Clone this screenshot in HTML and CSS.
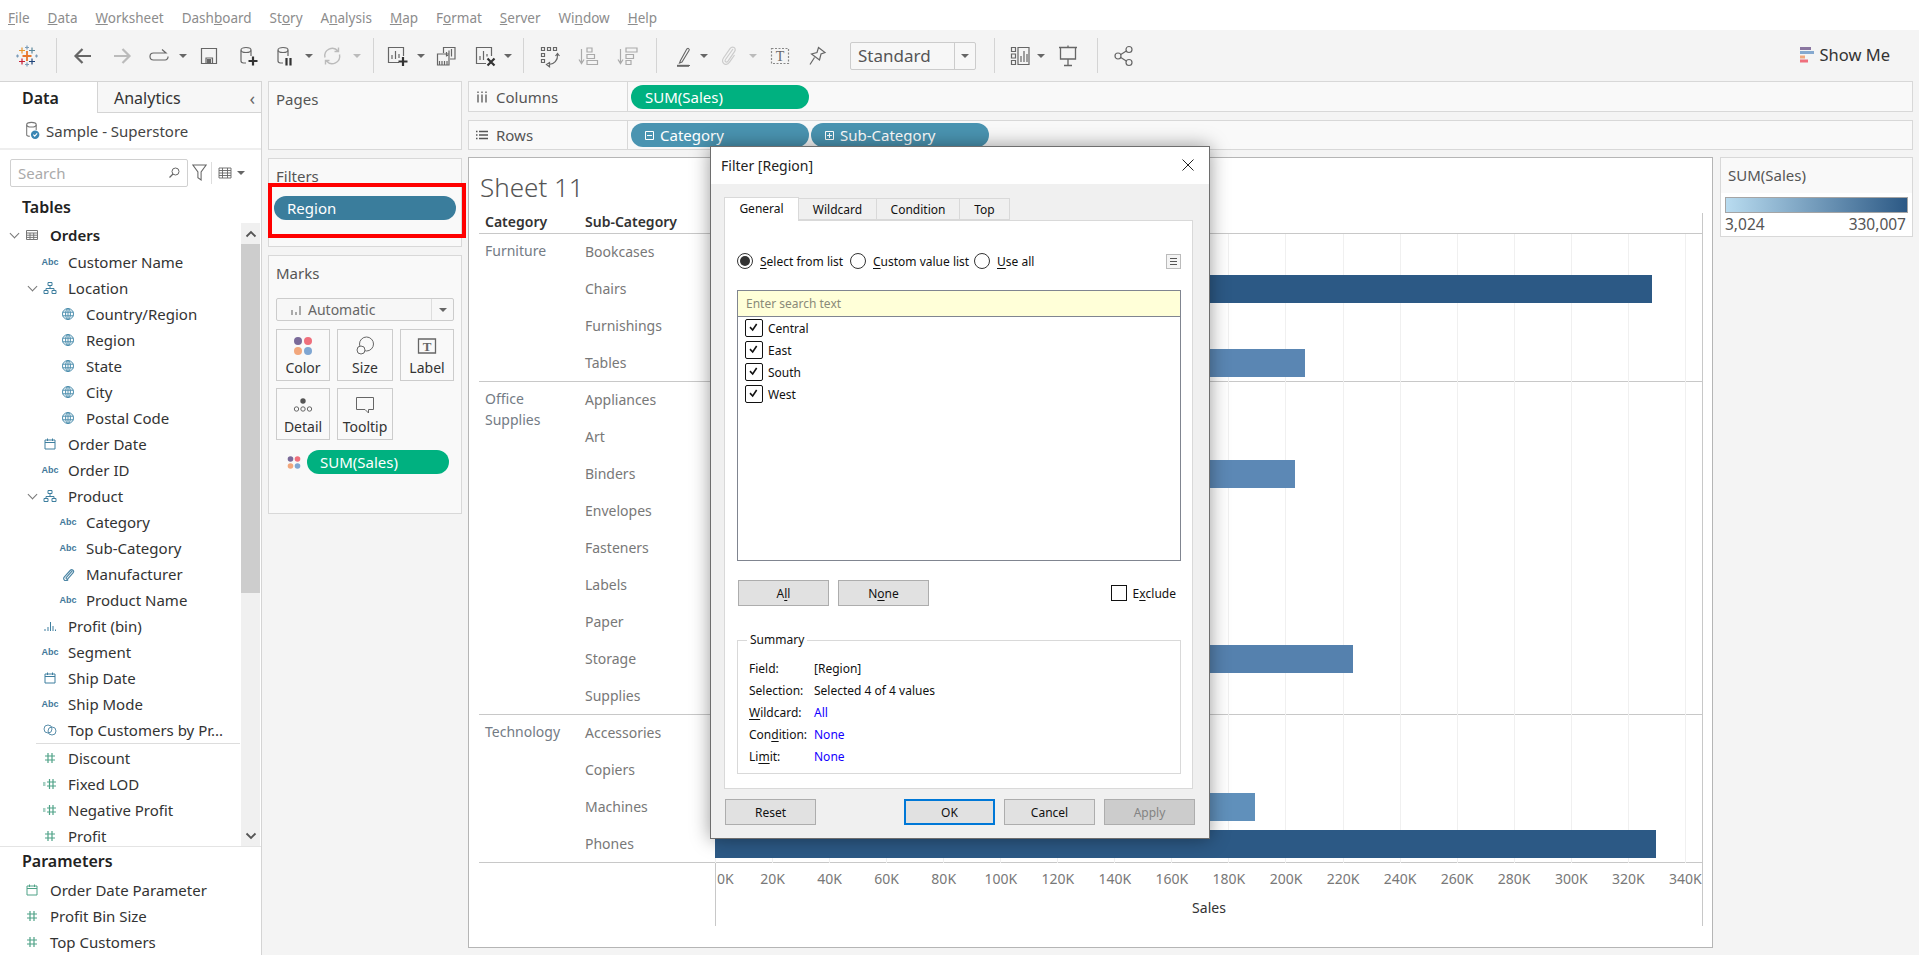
FILE: index.html
```html
<!DOCTYPE html>
<html lang="en">
<head>
<meta charset="utf-8">
<title>Tableau - Sheet 11</title>
<link rel="stylesheet" href="styles.css">
</head>
<body>
<svg class="sprite" aria-hidden="true">
  <symbol id="i-table" viewBox="0 0 14 14"><path d="M1.5 2.5h11v9h-11zM1.5 5h11M1.5 7.2h11M1.5 9.4h11M5 5v6.5M8.7 5v6.5" fill="none" stroke="#777"/></symbol>
  <symbol id="i-hier" viewBox="0 0 14 14"><path d="M5 1.5h4v3H5zM1 9.5h4v3H1zM9 9.5h4v3H9zM7 4.5v3M3 9.5v-2h8v2" fill="none" stroke="#3f7f9f"/></symbol>
  <symbol id="i-globe" viewBox="0 0 14 14"><g fill="none" stroke="#4d8fae"><circle cx="7" cy="7" r="5.5"/><ellipse cx="7" cy="7" rx="2.4" ry="5.5"/><path d="M1.5 5.2h11M1.5 8.8h11M7 1.5v11"/></g></symbol>
  <symbol id="i-cal" viewBox="0 0 14 14"><path d="M2 3h10v9H2zM2 5.5h10M4.5 1.5V4M9.5 1.5V4" fill="none" stroke="#3f7f9f"/></symbol>
  <symbol id="i-calg" viewBox="0 0 14 14"><path d="M2 3h10v9H2zM2 5.5h10M4.5 1.5V4M9.5 1.5V4" fill="none" stroke="#4fa287"/></symbol>
  <symbol id="i-clip" viewBox="0 0 14 14"><path d="M11.200 3.800 5.400 10.400c-1 1.100.6 2.400 1.600 1.300l5-5.800c1.700-2-1-4.400-2.800-2.400L3.400 9.800c-2.400 2.800 1.500 5.400 3.700 2.700" fill="none" stroke="#4d86a5" stroke-width="1.200"/></symbol>
  <symbol id="i-bin" viewBox="0 0 14 14"><path d="M1.500 10h1v2h-1zM4.500 8h1v4h-1zM7 3h1v9H7zM9.500 7h1v5h-1zM12 10.500h1V12h-1z" fill="#3f7f9f"/></symbol>
  <symbol id="i-set" viewBox="0 0 14 14"><g fill="none" stroke="#5b8fab"><circle cx="5" cy="6" r="4"/><circle cx="9" cy="8" r="4"/></g></symbol>
  <symbol id="i-hash" viewBox="0 0 14 14"><path d="M5 2v10M9 2v10M2 5h10M2 9h10" fill="none" stroke="#4fa287" stroke-width="1.200"/></symbol>
  <symbol id="i-calc" viewBox="0 0 14 14"><path d="M6.500 2v10M10 2v10M4 5h9M4 9h9M0 6h2.500M0 8h2.500" fill="none" stroke="#4fa287" stroke-width="1.200"/></symbol>
  <symbol id="i-dots" viewBox="0 0 16 16"><circle cx="4" cy="4" r="3.200" fill="#7a6a99"/><circle cx="12" cy="4" r="3.200" fill="#ef6f7c"/><circle cx="4" cy="12" r="3.200" fill="#f2a77c"/><circle cx="12" cy="12" r="3.200" fill="#7fa6d2"/></symbol>
</svg>

<div class="page">
  <nav class="menubar">
    <span><u>F</u>ile</span><span><u>D</u>ata</span><span><u>W</u>orksheet</span><span>Dash<u>b</u>oard</span><span>St<u>o</u>ry</span><span>A<u>n</u>alysis</span><span><u>M</u>ap</span><span>F<u>o</u>rmat</span><span><u>S</u>erver</span><span>Wi<u>n</u>dow</span><span><u>H</u>elp</span>
  </nav>

  <header class="toolbar">
    <svg class="ic m15" viewBox="0 0 24 24" stroke-width="1.400">
      <path d="M12 7v10M7.500 12h9" stroke="#e8762b" stroke-width="1.800"/>
      <path d="M7 3.500v6M4 6.500h6" stroke="#e8962b"/>
      <path d="M17 3.500v6M14 6.500h6" stroke="#5b879b"/>
      <path d="M7 14.500v6M4 17.500h6" stroke="#c72035"/>
      <path d="M17 14.500v6M14 17.500h6" stroke="#1f447a"/>
      <path d="M12 1.500v4M10 3.500h4M12 18.500v4M10 20.500h4M2.500 10.500v3M1 12h3M21.500 10.500v3M20 12h3" stroke="#7b9cb8"/>
    </svg>
    <i class="sep m17"></i>
    <svg class="ic m14" viewBox="0 0 24 24"><path d="M20 12H5M11.500 5 4.500 12l7 7" stroke-width="2.200"/></svg>
    <svg class="ic m15 dim" viewBox="0 0 24 24"><path d="M4 12h15M12.500 5l7 7-7 7" stroke-width="2.200"/></svg>
    <svg class="ic m13" viewBox="0 0 24 24"><path d="M19 9H6.500a3.500 3.500 0 0 0 0 7H18a3 3 0 0 0 3-3.500M15 5.500 19 9l-4 0"/></svg>
    <i class="drop m8"></i>
    <svg class="ic m10" viewBox="0 0 24 24"><path d="M4.500 4.500h15v15h-15zM9 19.500V14h6.500v5.500"/><path d="M10.500 15.500h3v4h-3z" fill="#666"/></svg>
    <svg class="ic m15" viewBox="0 0 24 24"><path d="M5 6.500v10.500c0 1 1 1.800 2.500 2H10M15 6.500V12"/><ellipse cx="10" cy="6" rx="5" ry="2.500"/><path d="M17 12.500v9M12.500 17h9" stroke="#333" stroke-width="2.200"/></svg>
    <svg class="ic m13" viewBox="0 0 24 24"><path d="M5 6.500v10.500c0 1 1 1.800 2.500 2H10M15 6.500V12"/><ellipse cx="10" cy="6" rx="5" ry="2.500"/><path d="M13.500 14v7.500M17.500 14v7.500" stroke="#333" stroke-width="2.200"/></svg>
    <i class="drop m8"></i>
    <svg class="ic m7 dim" viewBox="0 0 24 24"><path d="M5 13.500A7.500 7.500 0 0 1 18 7M19.500 10.500A7.500 7.500 0 0 1 6.500 17M18.500 3.500V7.500h-4M5.500 20.500v-4h4" stroke-width="1.400"/></svg>
    <i class="drop m9 dimdrop"></i>
    <i class="sep m12"></i>
    <svg class="ic m11" viewBox="0 0 24 24"><path d="M14 18.500H3.500v-15h15V12M7 15v-4M10.500 15V7M14 14V10"/><path d="M18 13v9M13.500 17.500h9" stroke="#333" stroke-width="2.200"/></svg>
    <i class="drop m8"></i>
    <svg class="ic m9" viewBox="0 0 24 24"><path d="M9.500 9V3.500H21V15h-5"/><path d="M3.500 10H15v11H3.500zM14 11M5.500 21v-4M8 21v-4M10.500 21v-4M13 21v-4M13.500 12v-1M15 12.500v-6M17.500 12.500V5M12.500 12.500V8"/></svg>
    <svg class="ic m15" viewBox="0 0 24 24"><path d="M13 19.500H3.500v-16h15V12M7 16v-4M10.500 16V7M14 12.500V10"/><path d="m14.500 14.500 7 7M21.500 14.500l-7 7" stroke="#333" stroke-width="2.200"/></svg>
    <i class="drop m7"></i>
    <i class="sep m11"></i>
    <svg class="ic m13" viewBox="0 0 24 24"><path d="M4.500 3.500h3v3h-3zM10.500 3.500h3v3h-3zM16.500 3.500h3v3h-3zM4.500 9.500h3v3h-3zM4.500 15.500h3v3h-3zM20.500 11c.5 5-3.500 9.500-8.500 9.500M9.500 20.500l3-2v4.200zM18.500 12l2-2.500 2 2.500"/></svg>
    <svg class="ic m16 dimmer" viewBox="0 0 24 24"><path d="M4.500 5v13M2 15.500l2.500 4 2.500-4M10 4h5v4h-5zM10 10.500h7.500v4H10zM10 16.500h10.500v4H10z"/></svg>
    <svg class="ic m15 dimmer" viewBox="0 0 24 24"><path d="M4.500 5v13M2 15.500l2.500 4 2.500-4M10 4h11v4H10zM10 10.500h7.500v4H10zM10 16.500h5v4h-5z"/></svg>
    <i class="sep m16"></i>
    <svg class="ic m14" viewBox="0 0 24 24"><path d="M9.500 16.500 8.500 19l2.500-1 7-11.500c1-1.600-1.200-3-2.200-1.400zM7 21.500h12" stroke-width="1.100"/><path d="M6 21.800h12" stroke="#666" stroke-width="2"/></svg>
    <i class="drop m5"></i>
    <svg class="ic m9 faint" viewBox="0 0 24 24"><path d="M16 5 8.500 15.500c-1.500 2 1 3.700 2.500 1.700l6.500-9.500c2.500-3.500-2-6.500-4.500-3L6.500 14c-3.500 5 3 8.700 6 4.200l5-7.200"/></svg>
    <i class="drop m8 dimdrop"></i>
    <svg class="ic m11" viewBox="0 0 24 24"><path d="M3.500 4.500h17v15h-17z" stroke-dasharray="2 1.500" stroke="#888"/><text x="12" y="17" class="t-glyph">T</text></svg>
    <svg class="ic m13" viewBox="0 0 24 24"><path d="M13.500 3.500 20 8.500l-4 1.500-1.500 6-8-6 5.500-1.500zM9.500 13.500 5 20.500"/></svg>
    <div class="combo m21"><span>Standard</span><i class="combo-btn"><i class="drop"></i></i></div>
    <i class="sep m18"></i>
    <svg class="ic m13" viewBox="0 0 24 24"><path d="M3.500 3.500h4v4h-4zM3.500 10h4v4h-4zM3.500 16.500h4v4h-4zM10 3.500h11v17H10zM13 18v-6M16 18V7M19 18v-8"/></svg>
    <i class="drop m5"></i>
    <svg class="ic m11" viewBox="0 0 24 24"><path d="M3 3.500h18M4.500 4v11h15V4M12 15v7M8 21.500h8M12 1.500v2" stroke-width="1.300"/></svg>
    <i class="sep m17"></i>
    <svg class="ic m14" viewBox="0 0 24 24"><circle cx="17" cy="5.500" r="3"/><circle cx="6" cy="12" r="3"/><circle cx="17" cy="18.500" r="3"/><path d="m8.800 10.500 5.500-3.500M8.800 13.500l5.500 3.500"/></svg>
    <div class="showme">
      <svg class="showme-ic" viewBox="0 0 14 16"><path d="M0 0h11v3H0z" fill="#8a76a0"/><path d="M0 4h14v3H0z" fill="#86a9cf"/><path d="M0 8.500h5v3H0z" fill="#f2a77c"/><path d="M0 12.500h8v3H0z" fill="#ef6f7c"/></svg>
      <span>Show Me</span>
    </div>
  </header>

  <main class="workspace">
    <aside class="datapane">
      <div class="tabs">
        <div class="tab active">Data</div>
        <div class="tab">Analytics<span class="collapse">‹</span></div>
      </div>
      <div class="source">
        <svg class="source-ic" viewBox="0 0 14 18"><path d="M1.500 3.500V13c0 1 1 1.500 3 1.500M10.500 3.500v5" fill="none" stroke="#777"/><ellipse cx="6" cy="3.500" rx="4.500" ry="2.200" fill="none" stroke="#777"/><circle cx="9.500" cy="13" r="4" fill="#3a86b4"/><path d="m7.800 13 1.300 1.400 2.300-2.600" fill="none" stroke="#fff"/></svg>
        <span>Sample - Superstore</span>
      </div>
      <div class="searchrow">
        <div class="search"><span>Search</span><svg class="lens" viewBox="0 0 12 12"><circle cx="7.500" cy="4.500" r="3.500" fill="none" stroke="#666"/><path d="M5 7 1.500 10.500" stroke="#666" stroke-width="1.300"/></svg></div>
        <svg class="funnel" viewBox="0 0 14 16"><path d="M.8 1h12.400L8.500 7.500V15l-3-2V7.500z" fill="none" stroke="#666"/></svg>
        <i class="vline"></i>
        <svg class="viewico" viewBox="0 0 14 12"><path d="M1 1h12v10H1zM1 3.500h12M1 6h12M1 8.500h12M4.500 1v10M9.500 1v10" fill="none" stroke="#666" stroke-width=".9"/></svg>
        <i class="drop m5"></i>
      </div>
      <div class="heading tables-h">Tables</div>
      <div class="fields">
        <div class="fieldlist">
          <div class="row l0 bold"><i class="chev"></i><svg class="fi"><use href="#i-table"/></svg><span>Orders</span></div>
          <div class="row l1"><b class="abc">Abc</b><span>Customer Name</span></div>
          <div class="row l1 haschev"><i class="chev"></i><svg class="fi"><use href="#i-hier"/></svg><span>Location</span></div>
          <div class="row l2"><svg class="fi"><use href="#i-globe"/></svg><span>Country/Region</span></div>
          <div class="row l2"><svg class="fi"><use href="#i-globe"/></svg><span>Region</span></div>
          <div class="row l2"><svg class="fi"><use href="#i-globe"/></svg><span>State</span></div>
          <div class="row l2"><svg class="fi"><use href="#i-globe"/></svg><span>City</span></div>
          <div class="row l2"><svg class="fi"><use href="#i-globe"/></svg><span>Postal Code</span></div>
          <div class="row l1"><svg class="fi"><use href="#i-cal"/></svg><span>Order Date</span></div>
          <div class="row l1"><b class="abc">Abc</b><span>Order ID</span></div>
          <div class="row l1 haschev"><i class="chev"></i><svg class="fi"><use href="#i-hier"/></svg><span>Product</span></div>
          <div class="row l2"><b class="abc">Abc</b><span>Category</span></div>
          <div class="row l2"><b class="abc">Abc</b><span>Sub-Category</span></div>
          <div class="row l2"><svg class="fi"><use href="#i-clip"/></svg><span>Manufacturer</span></div>
          <div class="row l2"><b class="abc">Abc</b><span>Product Name</span></div>
          <div class="row l1"><svg class="fi"><use href="#i-bin"/></svg><span>Profit (bin)</span></div>
          <div class="row l1"><b class="abc">Abc</b><span>Segment</span></div>
          <div class="row l1"><svg class="fi"><use href="#i-cal"/></svg><span>Ship Date</span></div>
          <div class="row l1"><b class="abc">Abc</b><span>Ship Mode</span></div>
          <div class="row l1"><svg class="fi"><use href="#i-set"/></svg><span>Top Customers by Pr...</span></div>
          <hr class="divider">
          <div class="row l1"><svg class="fi"><use href="#i-hash"/></svg><span>Discount</span></div>
          <div class="row l1"><svg class="fi"><use href="#i-calc"/></svg><span>Fixed LOD</span></div>
          <div class="row l1"><svg class="fi"><use href="#i-calc"/></svg><span>Negative Profit</span></div>
          <div class="row l1"><svg class="fi"><use href="#i-hash"/></svg><span>Profit</span></div>
        </div>
        <div class="scrollbar">
          <div class="sb-btn"><svg viewBox="0 0 12 8"><path d="M1.500 6.500 6 2l4.500 4.500" fill="none" stroke="#555" stroke-width="1.800"/></svg></div>
          <div class="sb-thumb"></div>
          <div class="sb-track"></div>
          <div class="sb-btn"><svg viewBox="0 0 12 8"><path d="M1.500 1.500 6 6l4.500-4.500" fill="none" stroke="#555" stroke-width="1.800"/></svg></div>
        </div>
      </div>
      <div class="params">
        <div class="heading params-h">Parameters</div>
        <div class="row l0"><svg class="fi"><use href="#i-calg"/></svg><span>Order Date Parameter</span></div>
        <div class="row l0"><svg class="fi"><use href="#i-hash"/></svg><span>Profit Bin Size</span></div>
        <div class="row l0"><svg class="fi"><use href="#i-hash"/></svg><span>Top Customers</span></div>
      </div>
    </aside>

    <section class="cardcol">
      <div class="card pages"><h3>Pages</h3></div>
      <div class="card filters">
        <h3>Filters</h3>
        <div class="pill filterpill">Region</div>
        <div class="redbox"></div>
      </div>
      <div class="card marks">
        <h3>Marks</h3>
        <div class="marktype">
          <svg class="mt-ic" viewBox="0 0 12 12"><path d="M1 6h2v5H1zM5 8h2v3H5zM9 2h2v9H9z" fill="#aaa"/></svg>
          <span>Automatic</span>
          <i class="mt-btn"><i class="drop"></i></i>
        </div>
        <div class="markgrid">
          <div class="markbtn"><svg viewBox="0 0 16 16"><use href="#i-dots"/></svg><span>Color</span></div>
          <div class="markbtn"><svg viewBox="0 0 20 20"><circle cx="11.500" cy="8" r="7" fill="none" stroke="#666"/><circle cx="6" cy="14" r="4" fill="#f9f9f9" stroke="#666"/></svg><span>Size</span></div>
          <div class="markbtn"><svg viewBox="0 0 20 20"><path d="M1.500 3h17v14h-17z" fill="none" stroke="#666" stroke-width="1.300"/><text x="10" y="14.500" class="t-glyph small">T</text></svg><span>Label</span></div>
          <div class="markbtn"><svg viewBox="0 0 20 20"><circle cx="10" cy="6" r="2.700" fill="#555"/><g fill="none" stroke="#666"><circle cx="3.500" cy="14" r="2.200"/><circle cx="10" cy="14" r="2.200"/><circle cx="16.500" cy="14" r="2.200"/></g></svg><span>Detail</span></div>
          <div class="markbtn"><svg viewBox="0 0 20 20"><path d="M1.500 2.500h17v12h-5v3.500l-3.500-3.500h-8.500z" fill="none" stroke="#666"/></svg><span>Tooltip</span></div>
        </div>
        <div class="markfield">
          <svg viewBox="0 0 16 16"><use href="#i-dots"/></svg>
          <div class="pill green">SUM(Sales)</div>
        </div>
      </div>
    </section>

    <section class="maincol">
      <div class="shelf">
        <div class="shelf-label"><svg viewBox="0 0 12 12"><path d="M2 3.500v8M6 3.500v8M10 3.500v8M2 .5v1.500M6 .5v1.500M10 .5v1.500" stroke="#555" stroke-width="1.300" fill="none"/></svg>Columns</div>
        <div class="pill green shelfpill">SUM(Sales)</div>
      </div>
      <div class="shelf">
        <div class="shelf-label"><svg viewBox="0 0 12 12"><path d="M3 2.500h9M3 6h9M3 9.500h9M0 2.500h1.500M0 6h1.500M0 9.500h1.500" stroke="#555" stroke-width="1.300" fill="none"/></svg>Rows</div>
        <div class="pill blue shelfpill"><svg class="pm" viewBox="0 0 9 9"><path d="M.5.500h8v8h-8zM2 4.500h5" fill="none" stroke="#fff"/></svg>Category</div>
        <div class="pill blue shelfpill"><svg class="pm" viewBox="0 0 9 9"><path d="M.5.500h8v8h-8zM2 4.500h5M4.500 2v5" fill="none" stroke="#fff"/></svg>Sub-Category</div>
      </div>
      <div class="viewrow">
        <div class="view">
          <h1 class="sheet-title">Sheet 11</h1>
          <div class="chart">
            <div class="chart-head"><span>Category</span><span>Sub-Category</span><i></i></div>

            <div class="group">
              <div class="cat">Furniture</div>
              <div class="grouprows">
                <div class="crow"><span>Bookcases</span><div class="plot"><i class="bar" style="width:328px;background:#aacbe2"></i></div></div>
                <div class="crow"><span>Chairs</span><div class="plot"><i class="bar" style="width:937px;background:#2c5985"></i></div></div>
                <div class="crow"><span>Furnishings</span><div class="plot"><i class="bar" style="width:262px;background:#b0d0e6"></i></div></div>
                <div class="crow"><span>Tables</span><div class="plot"><i class="bar" style="width:590px;background:#5a86b3"></i></div></div>
              </div>
            </div>

            <div class="group">
              <div class="cat">Office<br>Supplies</div>
              <div class="grouprows">
                <div class="crow"><span>Appliances</span><div class="plot"><i class="bar" style="width:307px;background:#aacbe2"></i></div></div>
                <div class="crow"><span>Art</span><div class="plot"><i class="bar" style="width:77px;background:#b7d9ee"></i></div></div>
                <div class="crow"><span>Binders</span><div class="plot"><i class="bar" style="width:580px;background:#5c88b5"></i></div></div>
                <div class="crow"><span>Envelopes</span><div class="plot"><i class="bar" style="width:47px;background:#b7d9ee"></i></div></div>
                <div class="crow"><span>Fasteners</span><div class="plot"><i class="bar" style="width:9px;background:#b9dcf0"></i></div></div>
                <div class="crow"><span>Labels</span><div class="plot"><i class="bar" style="width:36px;background:#b8daee"></i></div></div>
                <div class="crow"><span>Paper</span><div class="plot"><i class="bar" style="width:224px;background:#b0d0e6"></i></div></div>
                <div class="crow"><span>Storage</span><div class="plot"><i class="bar" style="width:638px;background:#5581ae"></i></div></div>
                <div class="crow"><span>Supplies</span><div class="plot"><i class="bar" style="width:133px;background:#b5d6eb"></i></div></div>
              </div>
            </div>

            <div class="group">
              <div class="cat">Technology</div>
              <div class="grouprows">
                <div class="crow"><span>Accessories</span><div class="plot"><i class="bar" style="width:477px;background:#8ab4d6"></i></div></div>
                <div class="crow"><span>Copiers</span><div class="plot"><i class="bar" style="width:427px;background:#94bbdb"></i></div></div>
                <div class="crow"><span>Machines</span><div class="plot"><i class="bar" style="width:540px;background:#6090bb"></i></div></div>
                <div class="crow"><span>Phones</span><div class="plot"><i class="bar" style="width:941px;background:#2c5985"></i></div></div>
              </div>
            </div>

            <div class="axisrow">
              <div class="axis">
                <div class="ticks">
                  <span class="first">0K</span><span>20K</span><span>40K</span><span>60K</span><span>80K</span><span>100K</span><span>120K</span><span>140K</span><span>160K</span><span>180K</span><span>200K</span><span>220K</span><span>240K</span><span>260K</span><span>280K</span><span>300K</span><span>320K</span><span>340K</span>
                </div>
                <div class="axis-title">Sales</div>
              </div>
            </div>
          </div>
        </div>
        <div class="legend">
          <div class="legend-h">SUM(Sales)</div>
          <div class="legend-b">
            <div class="ramp"></div>
            <div class="ramp-labels"><span>3,024</span><span>330,007</span></div>
          </div>
        </div>
      </div>
    </section>
  </main>

  <div class="dialog">
    <div class="dlg-title"><span>Filter [Region]</span><svg viewBox="0 0 12 12"><path d="m.5.500 11 11M11.500.5l-11 11" stroke="#222" fill="none"/></svg></div>
    <div class="dlg-body">
      <div class="dlg-tabs">
        <div class="dtab on">General</div>
        <div class="dtab t2">Wildcard</div>
        <div class="dtab t3">Condition</div>
        <div class="dtab t4">Top</div>
      </div>
      <div class="dlg-panel">
        <div class="radios">
          <i class="radio on"></i><span class="r1"><u>S</u>elect from list</span>
          <i class="radio"></i><span class="r2"><u>C</u>ustom value list</span>
          <i class="radio"></i><span class="r3"><u>U</u>se all</span>
          <div class="listmenu"><i></i></div>
        </div>
        <div class="listbox">
          <div class="searchbox">Enter search text</div>
          <div class="checks">
            <label class="chk"><i class="cb"><svg viewBox="0 0 18 18"><path d="m4.500 8 3 3.200L12 4.500" fill="none" stroke="#111" stroke-width="1.800"/></svg></i>Central</label>
            <label class="chk"><i class="cb"><svg viewBox="0 0 18 18"><path d="m4.500 8 3 3.200L12 4.500" fill="none" stroke="#111" stroke-width="1.800"/></svg></i>East</label>
            <label class="chk"><i class="cb"><svg viewBox="0 0 18 18"><path d="m4.500 8 3 3.200L12 4.500" fill="none" stroke="#111" stroke-width="1.800"/></svg></i>South</label>
            <label class="chk"><i class="cb"><svg viewBox="0 0 18 18"><path d="m4.500 8 3 3.200L12 4.500" fill="none" stroke="#111" stroke-width="1.800"/></svg></i>West</label>
          </div>
        </div>
        <div class="allnone">
          <button class="btn">A<u>l</u>l</button>
          <button class="btn">N<u>o</u>ne</button>
          <label class="exclude"><i class="cb plain"></i>E<u>x</u>clude</label>
        </div>
        <fieldset class="summary">
          <legend>Summary</legend>
          <div class="sumgrid">
            <span>Field:</span><span>[Region]</span>
            <span>Selection:</span><span>Selected 4 of 4 values</span>
            <span><u>W</u>ildcard:</span><span class="val">All</span>
            <span>Con<u>d</u>ition:</span><span class="val">None</span>
            <span>Li<u>m</u>it:</span><span class="val">None</span>
          </div>
        </fieldset>
      </div>
      <div class="dlg-foot">
        <button class="btn reset">Reset</button>
        <span class="spacer"></span>
        <button class="btn ok">OK</button>
        <button class="btn">Cancel</button>
        <button class="btn off">Apply</button>
      </div>
    </div>
  </div>
</div>
</body>
</html>
```

FILE: styles.css
```css
* { box-sizing: border-box; }
html, body { margin: 0; height: 100%; }
body { background: #f4f4f4; overflow: hidden; font-family: "Noto Sans", "Open Sans", sans-serif; color: #333; }
.sprite { display: none; }
i { display: block; font-style: normal; }
.page { position: relative; width: 1919px; height: 955px; overflow: hidden; }

/* menu */
.menubar { height: 30px; background: #fff; display: flex; align-items: center; gap: 18px; padding: 6px 0 0 8px; font-size: 13.5px; color: #8c8c8c; }
.menubar u { text-underline-offset: 1px; }

/* toolbar */
.toolbar { height: 51px; display: flex; align-items: center; background: #f4f4f4; }
.ic { width: 24px; height: 24px; flex: none; fill: none; stroke: #666; stroke-width: 1.200; color: #666; }
.ic.dim { stroke: #bbb; }
.ic.dimmer { stroke: #aaa; }
.ic.faint { stroke: #ccc; }
.sep { width: 1px; height: 35px; background: #d4d4d4; flex: none; }
.drop { width: 0; height: 0; flex: none; border: solid transparent; border-width: 4px 4px 0; border-top-color: #666; }
.drop.dimdrop { border-top-color: #bbb; }
.t-glyph { font-family: "Liberation Serif", serif; font-size: 14px; text-anchor: middle; fill: #666; stroke: none; }
.t-glyph.small { font-size: 13px; font-weight: 700; }
.m5 { margin-left: 5px; } .m7 { margin-left: 7px; } .m8 { margin-left: 8px; } .m9 { margin-left: 9px; }
.m10 { margin-left: 10px; } .m11 { margin-left: 11px; } .m12 { margin-left: 12px; } .m13 { margin-left: 13px; }
.m14 { margin-left: 14px; } .m15 { margin-left: 15px; } .m16 { margin-left: 16px; } .m17 { margin-left: 17px; }
.m18 { margin-left: 18px; } .m21 { margin-left: 21px; }
.combo { width: 126px; height: 28px; border: 1px solid #ccc; border-radius: 2px; display: flex; align-items: center; background: #f7f7f7; font-size: 17px; color: #555; flex: none; }
.combo span { flex: 1; padding-left: 7px; }
.combo-btn { width: 21px; height: 100%; border-left: 1px solid #ccc; display: flex; align-items: center; justify-content: center; }
.showme { margin-left: auto; margin-right: 29px; margin-bottom: 2px; display: flex; align-items: center; gap: 6px; font-size: 16.5px; color: #333; }
.showme-ic { width: 14px; height: 16px; }

/* workspace */
.workspace { height: 874px; display: grid; grid-template-columns: 262px 194px 1fr; column-gap: 6px; padding-right: 6px; }

/* data pane */
.datapane { background: #fff; border-right: 1px solid #d4d4d4; display: flex; flex-direction: column; height: 874px; font-size: 15px; }
.tabs { height: 32px; display: flex; flex: none; }
.tab { display: flex; align-items: center; font-size: 16px; color: #333; padding-top: 2px; }
.tab.active { width: 97px; padding-left: 22px; font-weight: 600; color: #222; border-top: 1px solid #d4d4d4; padding-top: 0; }
.tab:not(.active) { flex: 1; padding-left: 16px; background: #f7f7f7; border: 1px solid #d4d4d4; border-right: 0; }
.collapse { margin-left: auto; margin-right: 6px; font-size: 18px; color: #666; line-height: 1; }
.source { height: 37px; flex: none; display: flex; align-items: center; padding-left: 25px; gap: 6px; border-bottom: 2px solid #eee; color: #444; font-size: 15px; }
.source-ic { width: 15px; height: 19px; }
.searchrow { height: 45px; flex: none; display: flex; align-items: center; padding-left: 10px; }
.search { width: 178px; height: 28px; border: 1px solid #d0d0d0; border-radius: 2px; display: flex; align-items: center; justify-content: space-between; padding: 0 7px; color: #aaa; font-size: 15px; }
.lens { width: 12px; height: 12px; }
.funnel { width: 15px; height: 17px; margin-left: 4px; }
.vline { width: 1px; height: 22px; background: #ddd; margin-left: 4px; }
.viewico { width: 14px; height: 12px; margin-left: 6px; }
.heading { font-weight: 600; font-size: 16px; color: #222; }
.tables-h { height: 28px; flex: none; padding-left: 22px; line-height: 24px; }
.fields { height: 623px; flex: none; display: flex; overflow: hidden; }
.fieldlist { width: 241px; flex: none; }
.row { height: 26px; display: flex; align-items: center; color: #333; white-space: nowrap; }
.row.bold { padding-bottom: 2px; }
.row.bold span { font-weight: 600; color: #222; }
.fi { width: 14px; height: 14px; flex: none; margin-right: 11px; }
.abc { width: 18px; margin-right: 9px; font: 700 9px/1 "Liberation Sans", sans-serif; color: #43789a; text-align: center; flex: none; }
.row .fi { margin-left: 2px; margin-right: 11px; }
.chev { width: 18px; flex: none; position: relative; height: 14px; }
.chev::before { content: ""; display: block; width: 6px; height: 6px; margin: 2px 0 0 6px; border: solid #777; border-width: 0 1.300px 1.300px 0; transform: rotate(45deg); }
.l0 { padding-left: 5px; }
.l0 > .fi:first-child { margin-left: 20px; }
.l1 { padding-left: 41px; }
.l1.haschev { padding-left: 23px; }
.l2 { padding-left: 59px; }
.divider { margin: 0 1px 1px 36px; border: 0; border-top: 1px solid #ddd; }
.scrollbar { width: 19px; margin-right: 1px; display: flex; flex-direction: column; background: #f0f0f0; }
.sb-btn { height: 21px; display: flex; align-items: center; justify-content: center; flex: none; }
.sb-btn svg { width: 12px; height: 8px; }
.sb-thumb { height: 349px; background: #cdcdcd; flex: none; }
.sb-track { flex: 1; }
.params { flex: 1; border-top: 1px solid #e4e4e4; }
.params-h { height: 30px; padding-left: 22px; line-height: 28px; }

/* cards */
.cardcol { display: flex; flex-direction: column; gap: 8px; }
.card { background: #f9f9f9; border: 1px solid #d8d8d8; position: relative; }
.card h3 { margin: 0; font-weight: 400; font-size: 15px; color: #555; line-height: 20px; }
.pages { height: 69px; padding: 7px; }
.filters { height: 89px; padding: 7px; }
.marks { height: 259px; padding: 7px; }
.redbox { position: absolute; left: -1px; top: 24px; width: 198px; height: 55px; border: 4px solid #f00; }

.pill { display: flex; align-items: center; height: 24px; border-radius: 12px; color: #fff; font-size: 15px; flex: none; }
.filterpill { background: #3a7d9c; width: 182px; margin: 10px 0 0 -2px; padding-left: 13px; }
.green { background: #00b180; }
.blue { background: #4a94b1; }

.marktype { height: 23px; margin-top: 15px; border: 1px solid #ccc; border-radius: 2px; display: flex; align-items: center; font-size: 14px; color: #666; background: #f7f7f7; }
.mt-ic { width: 12px; height: 12px; margin: 0 6px 0 13px; }
.marktype span { flex: 1; }
.mt-btn { width: 22px; height: 100%; border-left: 1px solid #ddd; display: flex; align-items: center; justify-content: center; }
.markgrid { display: grid; grid-template-columns: 54px 56px 54px; gap: 7px; margin-top: 8px; }
.markbtn { height: 52px; border: 1px solid #ccc; display: flex; flex-direction: column; align-items: center; padding-top: 6px; font-size: 14px; color: #333; line-height: 22px; }
.markbtn svg { width: 20px; height: 20px; margin-bottom: 1px; }
.markfield { display: flex; align-items: center; margin-top: 10px; padding-left: 11px; gap: 6px; }
.markfield svg { width: 14px; height: 15px; flex: none; }
.markfield .pill { width: 142px; padding-left: 13px; }

/* shelves */
.maincol { display: flex; flex-direction: column; min-width: 0; }
.shelf { height: 31px; margin-bottom: 8px; background: #f9f9f9; border: 1px solid #d8d8d8; display: flex; align-items: center; gap: 2px; }
.shelf + .shelf { height: 30px; margin-bottom: 7px; }
.shelf-label { width: 159px; height: 100%; border-right: 1px solid #d8d8d8; display: flex; align-items: center; gap: 8px; padding-left: 7px; font-size: 15px; color: #555; margin-right: 1px; }
.shelf-label svg { width: 12px; height: 12px; }
.shelfpill { width: 178px; padding-left: 14px; }
.pm { width: 9px; height: 9px; margin-right: 6px; }

.viewrow { flex: 1; display: grid; grid-template-columns: 1245px 193px; column-gap: 7px; padding-bottom: 7px; align-items: start; }
.view { height: 791px; background: #fff; border: 1px solid #b5b5b5; padding-left: 10px; }
.sheet-title { margin: 0; height: 55px; font-weight: 300; font-size: 26px; color: #555; line-height: 58px; padding-left: 1px; }
.chart { width: 1224px; }
.chart-head { display: grid; grid-template-columns: 100px 136px 988px; height: 21px; border-bottom: 1px solid #c8c8c8; font-size: 14px; font-weight: 600; color: #333; line-height: 18px; }
.chart-head span { padding-left: 6px; }
.chart-head i { border-right: 1px solid #c8c8c8; margin-bottom: -1px; }
.group { display: grid; grid-template-columns: 100px 1fr; box-shadow: inset 0 -1px #c8c8c8; }
.cat { padding: 6px 0 0 6px; font-size: 14px; line-height: 21px; color: #737b85; }
.crow { display: grid; grid-template-columns: 136px 988px; height: 37px; font-size: 14px; color: #787878; }
.crow span { padding-left: 6px; line-height: 36px; }
.plot { padding-top: 4px; border-right: 1px solid #c8c8c8; background: repeating-linear-gradient(to right, #f0f0f0 0 1px, transparent 1px 57.05px); }
.bar { height: 28px; }
.axisrow { padding-left: 236px; }
.axis { height: 63px; width: 988px; border-left: 1px solid #c8c8c8; border-right: 1px solid #c8c8c8; }
.ticks { display: flex; margin-left: -29px; padding-top: 6px; font-size: 14px; color: #787878; line-height: 20px; }
.ticks span { width: 57.05px; flex: none; text-align: center; }
.ticks .first { text-align: left; padding-left: 30px; }
.axis-title { margin-top: 9px; text-align: center; font-size: 14px; color: #333; line-height: 20px; }

.legend { height: 80px; background: #fff; border: 1px solid #d8d8d8; font-size: 15px; color: #555; }
.legend-h { height: 35px; background: #f9f9f9; padding: 7px 0 0 7px; line-height: 20px; }
.legend-b { padding: 4px 4px 0; }
.ramp { height: 16px; border: 1px solid #a5a5a5; background: linear-gradient(to right, #b9dcf0, #2c5985); }
.ramp-labels { display: flex; justify-content: space-between; padding-right: 2px; line-height: 22px; font-size: 15.500px; }

/* dialog */
.dialog { position: absolute; left: 710px; top: 146px; width: 500px; height: 693px; border: 1px solid #6e6e6e; background: #f0f0f0; box-shadow: 0 0 18px rgba(0,0,0,.4); font-size: 12px; color: #111; display: flex; flex-direction: column; }
.dialog u { text-underline-offset: 2px; }
.dlg-title { height: 37px; background: #fff; display: flex; align-items: center; justify-content: space-between; padding: 0 15px 0 10px; font-size: 14px; color: #222; flex: none; }
.dlg-title svg { width: 12px; height: 12px; margin-bottom: 2px; }
.dlg-body { flex: 1; padding: 0 14px 0 13px; display: flex; flex-direction: column; }
.dlg-tabs { display: flex; height: 36px; align-items: flex-end; flex: none; position: relative; z-index: 1; }
.dtab { height: 22px; border: 1px solid #d9d9d9; border-left: 0; display: flex; align-items: center; justify-content: center; }
.dtab.on { height: 24px; width: 75px; background: #fff; border-left: 1px solid #d9d9d9; border-bottom: 0; margin-bottom: -1px; padding-bottom: 2px; }
.t2 { width: 78px; }
.t3 { width: 83px; }
.t4 { width: 50px; }
.dlg-panel { height: 569px; background: #fff; border: 1px solid #d9d9d9; padding: 32px 11px 0 12px; flex: none; width: 469px; }
.radios { display: flex; align-items: center; height: 16px; }
.radio { width: 16px; height: 16px; border: 1px solid #333; border-radius: 50%; flex: none; position: relative; background: #fff; }
.radio.on::after { content: ""; position: absolute; inset: 2px; background: #333; border-radius: 50%; }
.r1 { margin: 0 4px 0 7px; width: 86px; white-space: nowrap; }
.r2 { margin: 0 4px 0 7px; width: 97px; white-space: nowrap; }
.r3 { margin: 0 0 0 7px; }
.listmenu { margin-left: auto; width: 15px; height: 15px; border: 1px solid #bbb; background: #f4f4f4; display: flex; align-items: center; justify-content: center; }
.listmenu i { width: 7px; height: 7px; background: repeating-linear-gradient(#555 0 1px, transparent 1px 3px); }
.listbox { margin-top: 21px; width: 444px; height: 271px; border: 1px solid #808590; }
.searchbox { height: 26px; background: #ffffd8; border-bottom: 1px solid #808590; padding-left: 8px; line-height: 25px; color: #8a8a78; }
.checks { padding: 0 0 0 7px; }
.chk { display: flex; align-items: center; height: 22px; gap: 5px; }
.cb { width: 18px; height: 18px; border: 1px solid #111; border-radius: 2px; background: #fff; flex: none; }
.cb svg { display: block; width: 16px; height: 16px; }
.allnone { display: flex; align-items: center; margin-top: 19px; padding-left: 1px; }
.btn { width: 91px; height: 26px; border: 1px solid #adadad; background: #e1e1e1; font: inherit; color: #111; padding: 0; flex: none; }
.allnone .btn + .btn { margin-left: 9px; }
.exclude { margin-left: auto; margin-right: 5px; display: flex; align-items: center; }
.cb.plain { width: 16px; height: 16px; border-radius: 0; margin-right: 6px; }
.summary { margin: 26px 0 0; padding: 0 11px; width: 444px; height: 142px; border: 1px solid #d9d9d9; }
.summary legend { padding: 0 3px; margin-left: -2px; line-height: 16px; }
.sumgrid { display: grid; grid-template-columns: 65px 1fr; grid-auto-rows: 22px; align-items: center; margin-top: 9px; }
.val { color: #1400ff; }
.dlg-foot { display: flex; gap: 9px; margin-top: 10px; }
.btn.reset { margin-left: 1px; }
.spacer { flex: 1; }
.btn.ok { border: 2px solid #0078d7; }
.btn.off { background: #ccc; color: #838383; }
```
